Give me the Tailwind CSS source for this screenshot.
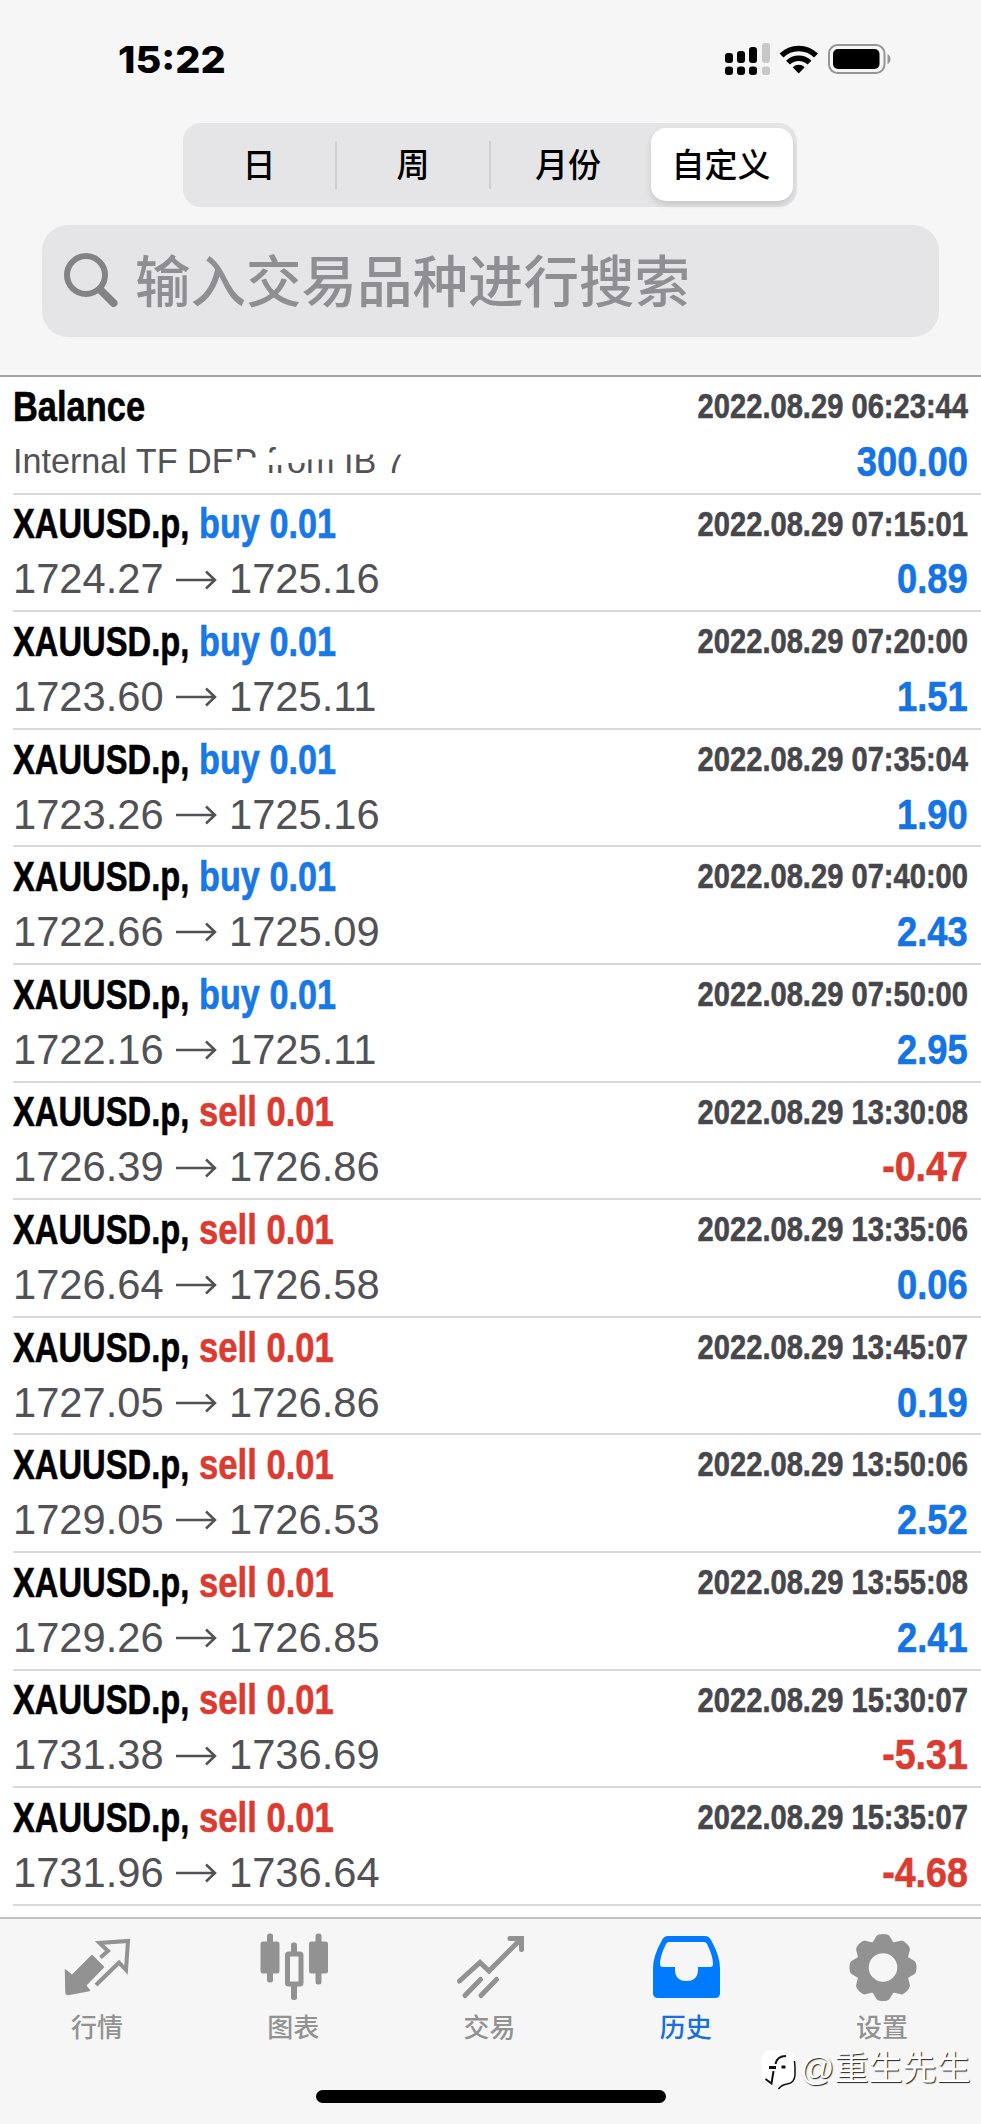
<!DOCTYPE html>
<html lang="zh">
<head>
<meta charset="utf-8">
<title>历史</title>
<script src="https://cdn.jsdelivr.net/npm/@tailwindcss/browser@4"></script>
</head>
<body class="bg-white">
<div class="relative flex h-[2124px] w-[981px] flex-col overflow-hidden bg-white font-['Liberation_Sans','Noto_Sans_CJK_SC',sans-serif]">
  <header class="flex h-[377px] shrink-0 flex-col border-b-2 border-[#a3a3a5] bg-[#f6f6f6]">
    <div class="flex h-[123px] items-start justify-between pl-[118px] pr-[90px]">
      <div class="mt-[37px] origin-left scale-x-[1.07] text-[37px] leading-[46px] font-extrabold font-['Inter',sans-serif]">15:22</div>
      <svg class="mt-[40px]" width="168" height="40" viewBox="723 40 168 40">
        <g fill="#000">
          <rect x="725" y="53" width="8" height="10" rx="3"/><rect x="737" y="51" width="8" height="12" rx="3"/><rect x="749" y="47" width="8" height="16" rx="3"/>
          <rect x="725" y="66.500" width="8" height="8.500" rx="3"/><rect x="737" y="66.500" width="8" height="8.500" rx="3"/><rect x="749" y="66.500" width="8" height="8.500" rx="3"/>
        </g>
        <g fill="#c8c8c8"><rect x="762" y="43" width="8" height="20" rx="3"/><rect x="762" y="66.500" width="8" height="8.500" rx="2.500"/></g>
        <path d="M781.500 55.500a24.500 24.500 0 0 1 34.500 0" fill="none" stroke="#000" stroke-width="5.500"/>
        <path d="M788 62.700a15 15 0 0 1 21.500 0" fill="none" stroke="#000" stroke-width="5.500"/>
        <path d="M798.700 73.500l-6-6.200a8.600 8.600 0 0 1 12 0z"/>
        <rect x="829" y="45" width="55.500" height="28" rx="8.500" fill="none" stroke="#969696" stroke-width="2"/>
        <rect x="833" y="49" width="46.500" height="20" rx="5" fill="#000"/>
        <path d="M887.500 54v10q3-1.500 3-5t-3-5z" fill="#969696"/>
      </svg>
    </div>
    <div class="ml-[183px] flex h-[84px] w-[614px] items-center rounded-[18px] bg-[#e5e5e7] text-[33px] leading-none font-medium text-black">
      <div class="flex h-[48px] w-[154px] items-center justify-center border-r-2 border-[#cfcfd2]"><span>日</span></div>
      <div class="flex h-[48px] w-[154px] items-center justify-center border-r-2 border-[#cfcfd2]"><span>周</span></div>
      <div class="flex h-[48px] w-[156px] items-center justify-center"><span class="-ml-0.5">月份</span></div>
      <div class="-mt-0.5 ml-[4px] flex h-[73px] w-[142px] items-center justify-center rounded-[15px] bg-white shadow-[0_4px_6px_rgba(0,0,0,0.13)]"><span class="mt-0.5 -ml-0.5">自定义</span></div>
    </div>
    <div class="mt-[18px] ml-[42px] flex h-[112px] w-[897px] items-center rounded-[26px] bg-[#e5e5e8] pl-[21px]">
      <svg width="56" height="56" viewBox="0 0 56 56" fill="none" stroke="#838386"><circle cx="23" cy="22" r="19" stroke-width="6"/><path d="M37 36.500L50.500 50" stroke-width="8" stroke-linecap="round"/></svg>
      <span class="mt-[5px] ml-[16px] text-[55.5px] leading-none font-medium whitespace-nowrap text-[#8e8e93]">输入交易品种进行搜索</span>
    </div>
  </header>

  <main id="list" class="flex h-[1529px] shrink-0 flex-col pl-[13px]"></main>

  <nav class="mt-[11px] grid h-[207px] shrink-0 grid-cols-5 border-t-2 border-[#c3c3c4] bg-[#f6f6f6] text-[26px] leading-none font-medium text-[#929292]">
    <div class="flex flex-col items-center">
      <svg class="mt-[10px]" width="80" height="76" viewBox="58 1929 80 76"><path d="M65.500 1970L72 1975.500L92 1955.500L103.500 1967L85.500 1985.500L89.500 1990.500L68 1994.500Q66 1994.500 66 1992.500Z" fill="#929292" stroke="#929292" stroke-width="1.500" stroke-linejoin="round"/><path d="M100.500 1957.500L108 1951L99.500 1943L128 1941L126 1970L119 1962.500L96 1985" fill="none" stroke="#929292" stroke-width="4"/></svg>
      <span class="mt-[10px] -ml-0.5">行情</span>
    </div>
    <div class="flex flex-col items-center">
      <svg class="mt-[10px]" width="80" height="76" viewBox="254 1929 80 76" fill="#929292"><rect x="260.500" y="1941.500" width="19" height="32" rx="2.500"/><rect x="267" y="1933.500" width="6" height="49" rx="2.500"/><rect x="309" y="1941.500" width="19" height="32" rx="2.500"/><rect x="315.500" y="1933.500" width="6" height="51" rx="2.500"/><rect x="291" y="1942.500" width="6" height="57.500" rx="2.500"/><rect x="287.500" y="1954" width="13.500" height="30" rx="1" fill="#f6f6f6" stroke="#929292" stroke-width="5"/></svg>
      <span class="mt-[10px] -ml-0.5">图表</span>
    </div>
    <div class="flex flex-col items-center">
      <svg class="mt-[10px]" width="80" height="76" viewBox="450 1929 80 76" fill="none" stroke="#929292" stroke-width="5" stroke-linecap="round" stroke-linejoin="miter"><path d="M459.500 1981L480 1962.500l9 8.500L520 1940"/><path d="M510 1938.500h11.500v11" stroke-width="5"/><path d="M465 1995.500l15.500-16M481 1995.500l15.500-16"/></svg>
      <span class="mt-[10px] -ml-0.5">交易</span>
    </div>
    <div class="flex flex-col items-center text-[#176fdb]">
      <svg class="mt-[10px]" width="80" height="76" viewBox="647 1929 80 76"><path fill="#007aff" fill-rule="evenodd" d="M668 1936h37q4 0 6 4 9 16 9 28v25q0 5-5 5h-57q-5 0-5-5v-25q0-12 9-28 2-4 6-4zm1 6q-2 0-3 2-6 12-6 20 0 3 3 3h12q-1 14 11.500 14t11.500-14h12q3 0 3-3 0-8-6-20-1-2-3-2z"/></svg>
      <span class="mt-[10px] -ml-0.5">历史</span>
    </div>
    <div class="flex flex-col items-center">
      <svg class="mt-[10px]" width="80" height="76" viewBox="-40 -38.500 80 76" fill="#929292"><defs><path id="tooth" d="M-11-24l4.500-7.500q1.500-2 6.500-2t6.500 2l4.500 7.500z"/></defs>
        <path fill-rule="evenodd" d="M-27 0a27 27 0 1 0 54 0a27 27 0 1 0-54 0zM-14.300 0a14.300 14.300 0 1 1 28.600 0a14.300 14.300 0 1 1-28.600 0z"/>
        <use href="#tooth"/><use href="#tooth" transform="rotate(45)"/><use href="#tooth" transform="rotate(90)"/><use href="#tooth" transform="rotate(135)"/><use href="#tooth" transform="rotate(180)"/><use href="#tooth" transform="rotate(225)"/><use href="#tooth" transform="rotate(270)"/><use href="#tooth" transform="rotate(315)"/></svg>
      <span class="mt-[10px] -ml-0.5">设置</span>
    </div>
  </nav>
  <div class="absolute top-[2090px] left-[316px] h-[13px] w-[350px] rounded-full bg-black"></div>
  <div class="absolute top-[2045px] left-[760px] flex items-center">
    <svg width="40" height="46" viewBox="760 2046 40 46"><path d="M773 2051h12q10 0 10 10v15q0 8-8 9-6 1-8.500 5v-5h-5q-12 0-12-11v-12q0-11 11.500-11z" fill="#fff"/><path d="M794.500 2062q.8 6 .5 14-.5 8-8 9-6 1-8.500 5" fill="none" stroke="#111" stroke-width="1.500"/><path d="M786 2057q-9 0-10.500 8M773.500 2072l-2 12.500-6-4.500" fill="none" stroke="#111" stroke-width="2"/><path d="M769 2068.500h7M781.500 2068h4" fill="none" stroke="#111" stroke-width="3"/></svg>
    <span class="text-[34px] leading-none whitespace-nowrap text-white [text-shadow:1px_1px_1px_#222]">@重生先生</span>
  </div>
</div>
<script>
const rows = [
  ['07:15:01','buy','1724.27','1725.16','0.89'],
  ['07:20:00','buy','1723.60','1725.11','1.51'],
  ['07:35:04','buy','1723.26','1725.16','1.90'],
  ['07:40:00','buy','1722.66','1725.09','2.43'],
  ['07:50:00','buy','1722.16','1725.11','2.95'],
  ['13:30:08','sell','1726.39','1726.86','-0.47'],
  ['13:35:06','sell','1726.64','1726.58','0.06'],
  ['13:45:07','sell','1727.05','1726.86','0.19'],
  ['13:50:06','sell','1729.05','1726.53','2.52'],
  ['13:55:08','sell','1729.26','1726.85','2.41'],
  ['15:30:07','sell','1731.38','1736.69','-5.31'],
  ['15:35:07','sell','1731.96','1736.64','-4.68']
];
const row = (title, time, detail, value) => `
  <section class="flex min-h-0 flex-1 flex-col border-b-2 border-[#d8d8da] pt-[2px] pr-[13px] whitespace-nowrap">
    <div class="flex h-[56px] items-center justify-between text-[42.5px] leading-none font-bold text-black [-webkit-text-stroke:0.6px]">
      <div class="flex">${title}</div>
      <span class="-mt-[3px] origin-right scale-x-[0.832] text-[35px] text-[#47474b]">2022.08.29 ${time}</span>
    </div>
    <div class="flex h-[54px] items-center justify-between leading-none text-[#515156]">
      ${detail}
      <span class="origin-right text-[42.5px] font-bold [-webkit-text-stroke:0.6px] ${value[0] === '-' ? 'scale-x-[0.885] text-[#db3b30]' : 'scale-x-[0.855] text-[#1474e4]'}">${value}</span>
    </div>
  </section>`;
let html = row('<span class="origin-left scale-x-[0.81]">Balance</span>', '06:23:44',
  `<div class="relative -mt-[3px] h-[35px]"><span class="block origin-left scale-x-[0.976] text-[35px]">Internal TF DEP from IB 7</span>
   <svg class="absolute top-0 left-0" width="400" height="40" viewBox="13 443 400 40"><path fill="#fff" d="M219 468H232V460H239V457.500H256L264 452.500H284V440H412V454.500H340V459.500H308L306 463H284V465H264L258 480H219z"/></svg></div>`, '300.00');
for (const [time, side, from, to, value] of rows) {
  html += row(`<span class="w-[186px]"><span class="inline-block origin-left scale-x-[0.77]">XAUUSD.p,</span></span><span class="origin-left ${side === 'buy' ? 'scale-x-[0.806] text-[#1778e6]' : 'scale-x-[0.815] text-[#db3b30]'}">${side} 0.01</span>`,
    time,
    `<div class="flex items-center text-[42.5px]"><span class="w-[163px]"><span class="inline-block origin-left scale-x-[0.98]">${from}</span></span><svg width="41" height="20" viewBox="0 0 41 20" fill="none" stroke="#515156" stroke-width="2.500"><path d="M0 10H39M30 1.500L39 10l-9 8.500"/></svg><span class="ml-[12px] origin-left scale-x-[0.98]">${to}</span></div>`, value);
}
document.getElementById('list').innerHTML = html;
</script>
</body>
</html>
